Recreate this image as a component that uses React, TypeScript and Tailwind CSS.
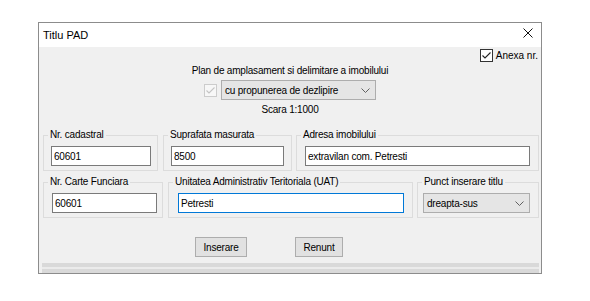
import type { ReactNode } from 'react';

// small "v" arrow used by the combo boxes
const Chevron = () => (
  <svg width="9" height="5" viewBox="0 0 9 5" className="shrink-0">
    <path d="M0.5 0.5 L4.5 4.5 L8.5 0.5" fill="none" stroke="#606060" strokeWidth="1" />
  </svg>
);

const Check = ({ color }: { color: string }) => (
  <svg width="11" height="11" viewBox="0 0 11 11">
    <path d="M1.5 5.5 L4 8 L9.5 2.5" fill="none" stroke={color} strokeWidth="1.1" />
  </svg>
);

const Combo = ({ text, className }: { text: string; className: string }) => (
  <div className={`h-[20px] flex items-center justify-between border border-[#adadad] bg-[#e5e5e5] pl-[3px] pr-[5px] ${className}`}>
    <span>{text}</span>
    <Chevron />
  </div>
);

const Group = ({ label, className, children }: { label: string; className: string; children: ReactNode }) => (
  <fieldset className={`border border-[#dcdcdc] pb-[4px] ${className}`}>
    <legend className="ml-[4px] px-[2px] leading-[12px]">{label}</legend>
    <div className="pt-[5px]">{children}</div>
  </fieldset>
);

const TextBox = ({ value, className }: { value: string; className: string }) => (
  <input
    readOnly
    value={value}
    className={`h-[20px] border bg-white px-[2px] outline-none ${className}`}
  />
);

export default function App() {
  return (
    <div className="w-[590px] h-[301px] bg-white pt-[22px] pl-[38px] font-['Liberation_Sans',Arial,sans-serif] text-[10px] tracking-[-0.2px] text-black">
      <div className="w-[504px] border border-[#8c8c8c] bg-[#f0f0f0] flex flex-col">
        {/* title bar */}
        <div className="h-[24px] bg-white flex justify-between pl-[4px] pr-[8px]">
          <span className="self-center text-[11px] tracking-normal">Titlu PAD</span>
          <svg width="10" height="10" viewBox="0 0 10 10" className="mt-[5px]">
            <path d="M0.5 0.5 L9.5 9.5 M9.5 0.5 L0.5 9.5" stroke="#111" strokeWidth="1" />
          </svg>
        </div>

        <div className="mt-[2px] flex justify-end items-center gap-[3px] pr-[3px]">
          <span className="w-[13px] h-[13px] border border-[#333] bg-white flex items-center justify-center">
            <Check color="#222" />
          </span>
          <span className="leading-[13px] tracking-normal">Anexa nr.</span>
        </div>

        <div className="mt-[3px] leading-[12px] text-center">Plan de amplasament si delimitare a imobilului</div>

        <div className="mt-[3px] flex justify-center items-center gap-[4px]">
          <span className="w-[13px] h-[13px] border border-[#cccccc] bg-[#f7f7f7] flex items-center justify-center">
            <Check color="#c4c4c4" />
          </span>
          <Combo text="cu propunerea de dezlipire" className="w-[155px]" />
        </div>

        <div className="mt-[4px] leading-[12px] text-center">Scara 1:1000</div>

        <div className="mt-[13px] flex pl-[4px]">
          <Group label="Nr. cadastral" className="w-[115px]">
            <TextBox value="60601" className="ml-[7px] w-[100px] border-[#7a7a7a]" />
          </Group>
          <Group label="Suprafata masurata" className="ml-[5px] w-[129px]">
            <TextBox value="8500" className="ml-[7px] w-[113px] border-[#7a7a7a]" />
          </Group>
          <Group label="Adresa imobilului" className="ml-[4px] w-[243px]">
            <TextBox value="extravilan com. Petresti" className="ml-[8px] w-[225px] border-[#7a7a7a]" />
          </Group>
        </div>

        <div className="mt-[5px] flex pl-[4px]">
          <Group label="Nr. Carte Funciara" className="w-[120px]">
            <TextBox value="60601" className="ml-[8px] w-[105px] border-[#7a7a7a]" />
          </Group>
          <Group label="Unitatea Administrativ Teritoriala (UAT)" className="ml-[5px] w-[245px]">
            <TextBox value="Petresti" className="ml-[9px] w-[226px] border-[#0078d7]" />
          </Group>
          <Group label="Punct inserare titlu" className="ml-[4px] w-[122px]">
            <Combo text="dreapta-sus" className="ml-[5px] w-[107px]" />
          </Group>
        </div>

        <div className="mt-[19px] flex pl-[156px]">
          <button className="h-[20px] w-[52px] border border-[#adadad] bg-[#e1e1e1]">Inserare</button>
          <button className="ml-[48px] h-[20px] w-[48px] border border-[#adadad] bg-[#e1e1e1]">Renunt</button>
        </div>

        {/* bottom strip */}
        <div className="mt-[6px] ml-[3px] w-[497px] h-[10px] bg-[#d9d9d9] pt-[4px]">
          <div className="h-[2px] bg-[#ebebeb]" />
        </div>
      </div>
    </div>
  );
}
